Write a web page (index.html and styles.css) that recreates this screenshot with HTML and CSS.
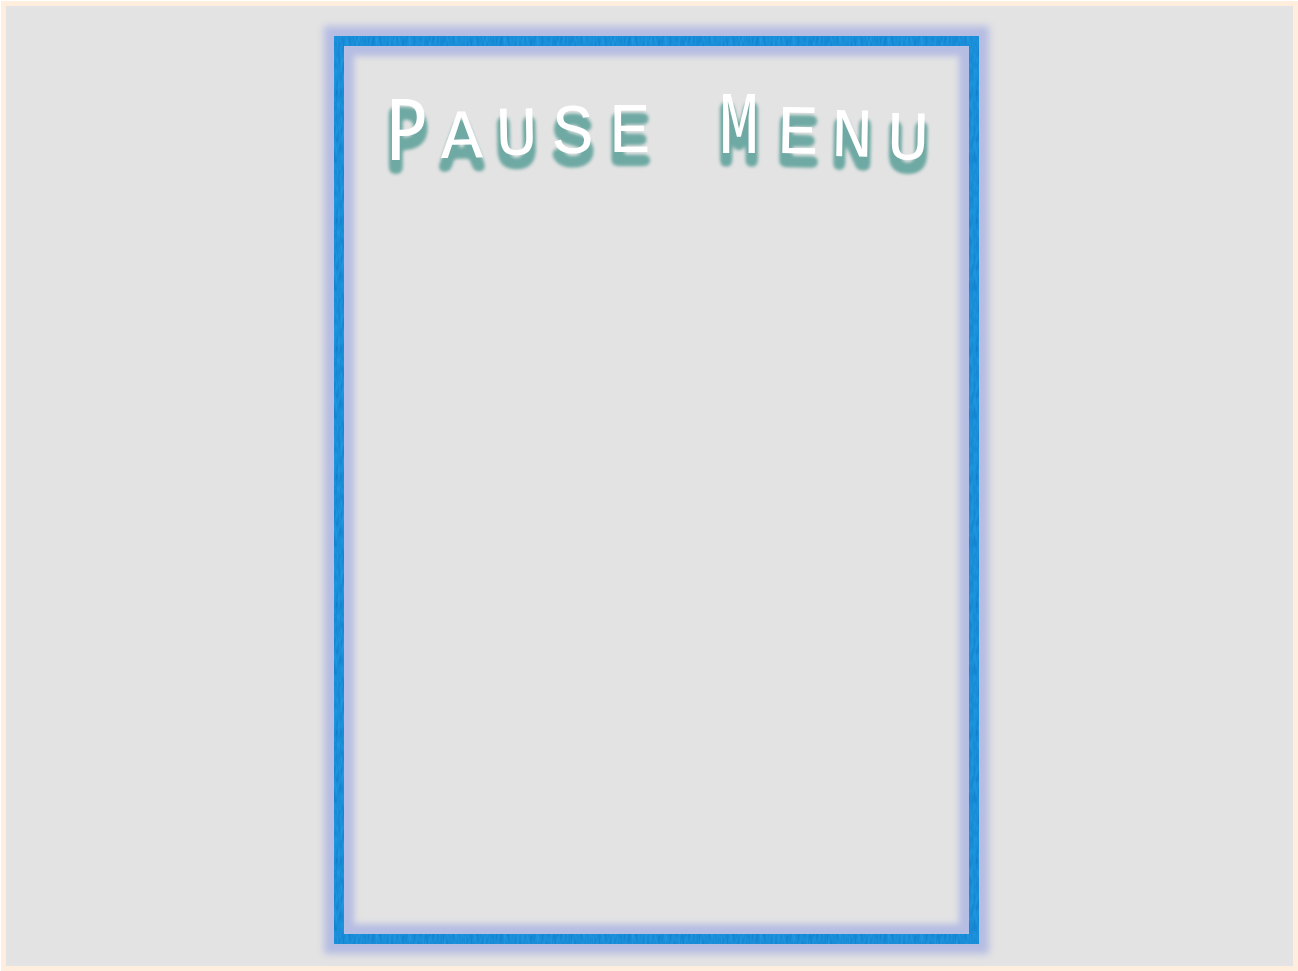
FILE: index.html
```html
<!DOCTYPE html>
<html lang="en">
<head>
<meta charset="utf-8">
<title>Pause Menu</title>
<link rel="stylesheet" href="styles.css">
</head>
<body>
<main class="screen">
  <section class="panel">
    <h1 class="title">
      <svg class="title-art" viewBox="0 0 625 150">
        <defs>
          <filter id="drop" x="-10%" y="-30%" width="120%" height="180%" color-interpolation-filters="sRGB">
            <feGaussianBlur in="SourceAlpha" stdDeviation="2.5"/>
            <feComponentTransfer><feFuncA type="linear" slope="8" intercept="-0.4"/></feComponentTransfer>
            <feOffset dx="0" dy="11"/>
            <feGaussianBlur stdDeviation="1.5" result="shape"/>
            <feFlood flood-color="#6fa9a3"/>
            <feComposite in2="shape" operator="in" result="shade"/>
            <feMerge><feMergeNode in="shade"/><feMergeNode in="SourceGraphic"/></feMerge>
          </filter>
        </defs>
        <g filter="url(#drop)">
          <text class="letters"><tspan class="capital" x="42" y="114" rotate="0">P</tspan><tspan x="97 152 208 265" y="112 109 107 106" rotate="-1 -1 0 0">AUSE</tspan> <tspan class="capital menu-capital" x="375" y="107" rotate="0">M</tspan><tspan x="433 487 543" y="107 110 113" rotate="1 1 1">ENU</tspan></text>
        </g>
      </svg>
    </h1>
  </section>
</main>
</body>
</html>
```
FILE: styles.css
```css
* { box-sizing: border-box; }

body {
  display: flex;
  min-height: 100vh;
  margin: 0;
  padding: 1px 0 0 1px;
  background: #fff;
}

.screen {
  display: flex;
  flex: 1;
  padding: 30px 0 22px;
  border: 5px solid #ffeedd;
  background: #e3e3e3;
}

.panel {
  width: 50.1%;
  margin-left: 25.5%;
  border: 10px solid transparent;
  background:
    linear-gradient(#e3e3e3, #e3e3e3) padding-box,
    url("data:image/svg+xml,%3Csvg xmlns='http://www.w3.org/2000/svg' width='128' height='128'%3E%3Cfilter id='n' x='0' y='0' width='1' height='1' color-interpolation-filters='sRGB'%3E%3CfeTurbulence type='fractalNoise' baseFrequency='0.45 0.09' numOctaves='2' stitchTiles='stitch'/%3E%3CfeColorMatrix values='.08 0 0 0 .06 .15 0 0 0 .48 .12 0 0 0 .79 0 0 0 0 1'/%3E%3C/filter%3E%3Crect width='128' height='128' filter='url(%23n)'/%3E%3C/svg%3E") border-box;
  box-shadow: 0 0 7px 10px #b6bde3, inset 0 0 6px 10px #b6bde3;
}

.title { margin: 0; }

.title-art {
  display: block;
  width: 100%;
}

.letters {
  fill: #fff;
  font-family: "Liberation Mono", monospace;
  font-size: 70px;
  font-weight: 400;
}

.capital {
  font-family: "Noto Sans Mono CJK SC", "Noto Sans CJK SC", monospace;
  font-size: 83px;
}

.menu-capital { font-size: 81px; }
```
